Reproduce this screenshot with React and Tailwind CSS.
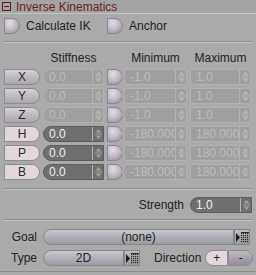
const font = "font-['Liberation_Sans_Narrow','Liberation_Sans',Arial,sans-serif]";

const Toggle = ({ className = '' }) => (
  <div
    className={`w-[16px] h-[16px] rounded-l-[3px] rounded-r-full border border-[#8a8590] ${className}`}
    style={{ background: 'radial-gradient(circle at 35% 30%, #e4dde4 0%, #c4bcc6 45%, #8e8794 100%)' }}
  />
);

const Spinner = ({ dim }) => (
  <div className="w-[11px] h-full flex items-center justify-center border-l border-[#b4b4b4]">
    <svg width="7" height="12" viewBox="0 0 7 12">
      <path d="M3.5 1 L6.5 4.5 L0.5 4.5 Z" fill={dim ? '#b8b8b8' : '#a0a0a0'} />
      <path d="M0 6 L7 6" stroke={dim ? '#b8b8b8' : '#a0a0a0'} strokeWidth="1" />
      <path d="M3.5 11 L6.5 7.5 L0.5 7.5 Z" fill={dim ? '#b8b8b8' : '#a0a0a0'} />
    </svg>
  </div>
);

const Field = ({ value, active, width, round }) => (
  <div
    className={`h-[16px] flex items-center border ${round || active ? 'rounded-l-full' : 'rounded-[2px]'} ${
      active ? 'bg-[#6f6f6f] border-[#5c5c5c] text-[#f2f2f2]' : 'bg-[#9f9f9f] border-[#b2b2b2] text-[#bdbdbd]'
    } ${width}`}
  >
    <span className="flex-1 pl-[5px] text-[12px] leading-none overflow-hidden whitespace-nowrap">{value}</span>
    <Spinner dim={!active} />
  </div>
);

const AxisButton = ({ label, on }) => (
  <div
    className={`w-[36px] h-[16px] flex items-center justify-center rounded-l-[3px] rounded-r-full border border-[#8e8a92] text-[12px] text-[#2a2a2a] ${
      on ? 'bg-[#e2d8dc]' : 'bg-gradient-to-b from-[#d6d0d6] to-[#aaa6ae]'
    }`}
  >
    {label}
  </div>
);

const GridIcon = () => (
  <div className="w-[16px] h-[16px] border border-[#858585] bg-gradient-to-b from-[#bdbdbd] to-[#9a9a9a] flex items-center justify-center">
    <svg width="13" height="11" viewBox="0 0 13 11">
      <path d="M0 1 L4 5.5 L0 10 Z" fill="#1e1e1e" />
      {[0, 1, 2, 3, 4].map((r) =>
        [0, 1, 2, 3].map((c) => (
          <rect key={`${r}-${c}`} x={5 + c * 2} y={1 + r * 2} width="1.2" height="1.2" fill="#2a2a2a" />
        ))
      )}
      <rect x="5" y="0" width="8" height="1" fill="#2a2a2a" />
    </svg>
  </div>
);

const Separator = () => (
  <div className="mx-[4px] border-t border-[#8c8c8c] border-b border-b-[#c2c2c2]" />
);

const rows = [
  { k: 'X', s: '0.0', min: '-1.0', max: '1.0', on: false },
  { k: 'Y', s: '0.0', min: '-1.0', max: '1.0', on: false },
  { k: 'Z', s: '0.0', min: '-1.0', max: '1.0', on: false },
  { k: 'H', s: '0.0', min: '-180.0000', max: '180.0000', on: true },
  { k: 'P', s: '0.0', min: '-180.0000', max: '180.0000', on: true },
  { k: 'B', s: '0.0', min: '-180.0000', max: '180.0000', on: true },
];

export default function App() {
  return (
    <div className={`${font} w-[256px] h-[275px] bg-[#aaaaaa] text-[#222] overflow-hidden`}>
      <div className="h-[14px] bg-[#a4a4a4] border-b border-[#c6c6c6] flex items-center">
        <div className="ml-[2px] w-[9px] h-[9px] border border-[#5a1e1e] flex items-center justify-center">
          <div className="w-[5px] h-[1px] bg-[#5a1e1e]" />
        </div>
        <span className="ml-[5px] text-[12px] leading-none text-[#6a1f1f]">Inverse Kinematics</span>
      </div>

      <div className="flex items-center h-[16px] mt-[4px] text-[12px]">
        <Toggle className="ml-[4px]" />
        <span className="ml-[6px] w-[81px]">Calculate IK</span>
        <Toggle />
        <span className="ml-[6px]">Anchor</span>
      </div>

      <div className="mt-[7px]">
        <Separator />
      </div>

      <div className="flex items-center h-[14px] mt-[8px] text-[12px]">
        <span className="ml-[43px] w-[61px] text-center">Stiffness</span>
        <span className="ml-[20px] w-[63px] text-center">Minimum</span>
        <span className="ml-[3px] w-[61px] text-center">Maximum</span>
      </div>

      <div className="flex flex-col gap-[3px] mt-[4px] pl-[4px]">
        {rows.map((r) => (
          <div key={r.k} className="flex items-center">
            <AxisButton label={r.k} on={r.on} />
            <div className="ml-[3px]">
              <Field value={r.s} active={r.on} width="w-[61px]" round />
            </div>
            <Toggle className="ml-[3px]" />
            <div className="relative ml-[1px]">
              <div className="absolute left-[-2px] top-[5px] w-[5px] h-[5px] rotate-45 bg-[#a4a4a4] border-l border-b border-[#b2b2b2]" />
              <Field value={r.min} width="w-[63px]" />
            </div>
            <div className="ml-[3px]">
              <Field value={r.max} width="w-[61px]" />
            </div>
          </div>
        ))}
      </div>

      <div className="mt-[8px]">
        <Separator />
      </div>

      <div className="flex items-center justify-end h-[16px] mt-[7px] pr-[4px] text-[12px]">
        <span className="mr-[6px]">Strength</span>
        <Field value="1.0" active width="w-[62px]" />
      </div>

      <div className="mt-[6px]">
        <Separator />
      </div>

      <div className="flex items-center h-[16px] mt-[8px] text-[12px]">
        <span className="w-[37px] text-right">Goal</span>
        <div className="ml-[6px] w-[191px] h-[16px] rounded-l-full border border-[#86868c] bg-gradient-to-b from-[#c6c8cc] to-[#9a9ca2] flex items-center justify-center text-[#222]">
          (none)
        </div>
        <GridIcon />
      </div>

      <div className="flex items-center h-[16px] mt-[5px] text-[12px]">
        <span className="w-[37px] text-right">Type</span>
        <div className="ml-[6px] w-[81px] h-[16px] rounded-l-full border border-[#86868c] bg-gradient-to-b from-[#c6c8cc] to-[#9a9ca2] flex items-center justify-center text-[#222]">
          2D
        </div>
        <GridIcon />
        <span className="ml-[14px]">Direction</span>
        <div className="ml-[4px] flex">
          <div className="w-[23px] h-[16px] rounded-l-full border border-[#8e8a92] bg-[#e2d8dc] flex items-center justify-center">+</div>
          <div className="w-[25px] h-[16px] rounded-r-full border border-[#8e8a92] bg-gradient-to-b from-[#c0b8c2] to-[#948e9a] flex items-center justify-center">-</div>
        </div>
      </div>

      <div className="mt-[5px] border-t border-[#8c8c8c]" />
    </div>
  );
}
